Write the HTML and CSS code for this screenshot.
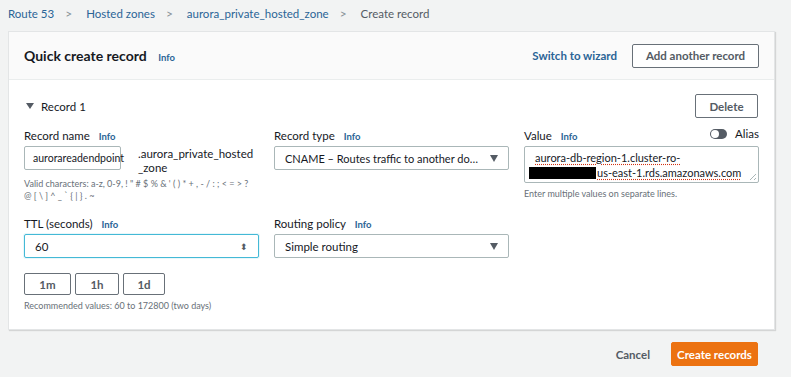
FILE: index.html
```html
<!DOCTYPE html>
<html lang="en">
  <head>
    <meta charset="UTF-8" />
    <title>Create record</title>
    <link rel="stylesheet" href="styles.css">
  </head>
  <body>
    <nav class="crumbs">
      <a>Route 53</a><span class="sep">&gt;</span>
      <a>Hosted zones</a><span class="sep">&gt;</span>
      <a>aurora_private_hosted_zone</a><span class="sep">&gt;</span>
      <span class="current">Create record</span>
    </nav>

    <section class="card">
      <header class="card-head">
        <h1>Quick create record <span class="info">Info</span></h1>
        <div class="head-actions">
          <a class="link">Switch to wizard</a>
          <button class="btn btn-wide">Add another record</button>
        </div>
      </header>

      <div class="card-body">
        <div class="record-bar">
          <span class="record-title"><span class="caret"></span>Record 1</span>
          <button class="btn">Delete</button>
        </div>

        <div class="grid">
          <div class="field">
            <label>Record name <span class="info">Info</span></label>
            <div class="name-row">
              <div class="input name-input">aurorareadendpoint</div>
              <div class="suffix">.aurora_private_hosted<br />_zone</div>
            </div>
            <p class="hint small">Valid characters: a-z, 0-9, ! " # $ % &amp; ' ( ) * + , - / : ; &lt; = &gt; ?<br />@ [ \ ] ^ _ ` { | } . ~</p>
          </div>

          <div class="field">
            <label>Record type <span class="info">Info</span></label>
            <div class="input select"><span class="ellip">CNAME – Routes traffic to another domain name and some AWS resources</span><span class="tri"></span></div>
          </div>

          <div class="field">
            <div class="value-label">
              <label>Value <span class="info">Info</span></label>
              <span class="alias"><span class="toggle"></span>Alias</span>
            </div>
            <div class="input textarea">
              <div><span class="spell">aurora-db-region-1.cluster-ro-</span></div>
              <div><span class="redact"></span><span class="spell">us-east-1.rds.amazonaws.com</span></div>
              <span class="grip"></span>
            </div>
            <p class="hint">Enter multiple values on separate lines.</p>
          </div>

          <div class="field">
            <label>TTL (seconds) <span class="info">Info</span></label>
            <div class="input focus">60<span class="spin">&#x2B0D;</span></div>
            <div class="ttl-btns">
              <button class="btn btn-sm">1m</button>
              <button class="btn btn-sm">1h</button>
              <button class="btn btn-sm">1d</button>
            </div>
            <p class="hint">Recommended values: 60 to 172800 (two days)</p>
          </div>

          <div class="field">
            <label>Routing policy <span class="info">Info</span></label>
            <div class="input select">Simple routing<span class="tri"></span></div>
          </div>
        </div>
      </div>
    </section>

    <footer class="actions">
      <a class="cancel">Cancel</a>
      <button class="btn btn-primary">Create records</button>
    </footer>
  </body>
</html>
```

FILE: styles.css
```css
* {
  box-sizing: border-box;
  font-family: Lato, "Noto Sans", Arial, sans-serif;
}

body {
  margin: 0;
  background-color: #f2f3f3;
  color: #16191f;
  font-size: 11.5px;
}

.crumbs {
  height: 31px;
  padding: 6px 0 0 8px;
  font-size: 11.5px;
  color: #545b64;
}

.crumbs a {
  color: #2a6496;
}

.crumbs .sep {
  display: inline-block;
  padding: 0 11px;
  color: #879196;
  font-size: 12px;
}

.card {
  margin-left: 8px;
  width: 767px;
  background-color: white;
  border: 1px solid #e3e5e6;
  box-shadow: 1px 1px 1px rgba(0, 0, 0, 0.12);
}

.card-head {
  display: flex;
  align-items: center;
  justify-content: space-between;
  height: 48px;
  padding: 0 15px;
  background-color: #fafafa;
  border-bottom: 1px solid #eaeded;
}

.card-head h1 {
  margin: 0;
  font-size: 14px;
  font-weight: 700;
}

.info {
  margin-left: 6px;
  font-size: 9.5px;
  font-weight: 700;
  color: #2a6496;
}

.card-head .info {
  margin-left: 8px;
}

.head-actions {
  display: flex;
  align-items: center;
  gap: 15px;
}

.link {
  color: #2a6496;
  font-weight: 700;
  font-size: 11.5px;
}

.btn {
  height: 24px;
  padding: 0 14px;
  background-color: white;
  border: 1px solid #687078;
  border-radius: 2px;
  color: #545b64;
  font-size: 11.5px;
  font-weight: 700;
  white-space: nowrap;
}

.btn-wide {
  width: 127px;
  padding: 0;
}

.card-body {
  padding: 14px 16px 17px 15px;
}

.record-bar {
  display: flex;
  justify-content: space-between;
  align-items: center;
  padding-left: 2px;
}

.record-bar .btn {
  width: 63px;
  padding: 0;
}

.record-title {
  font-size: 11.5px;
  display: flex;
  align-items: center;
}

.caret {
  width: 0;
  height: 0;
  margin-right: 7px;
  border-left: 4px solid transparent;
  border-right: 4px solid transparent;
  border-top: 6px solid #545b64;
}

.grid {
  display: grid;
  grid-template-columns: 235px 235px 235px;
  column-gap: 15px;
  row-gap: 15px;
  margin-top: 11px;
}

.field label {
  display: block;
  margin-bottom: 4px;
  font-size: 11.5px;
}

.input {
  position: relative;
  display: flex;
  align-items: center;
  height: 24px;
  padding: 0 10px;
  border: 1px solid #aab7b8;
  border-radius: 2px;
  font-size: 11.5px;
  background-color: white;
}

.name-row {
  display: flex;
  gap: 17px;
}

.name-input {
  width: 97px;
  padding: 0 8px;
  flex: none;
  font-size: 10.5px;
}

.suffix {
  font-size: 11.5px;
  line-height: 14px;
  padding-top: 1px;
}

.hint {
  margin: 5px 0 0;
  font-size: 9px;
  line-height: 12px;
  color: #687078;
}

.hint.small {
  margin-top: 3px;
}

.select {
  justify-content: space-between;
}

.ellip {
  flex: 1;
  white-space: nowrap;
  overflow: hidden;
  text-overflow: ellipsis;
  margin-right: 8px;
  font-size: 11px;
}

.tri {
  flex: none;
  width: 0;
  height: 0;
  border-left: 4.5px solid transparent;
  border-right: 4.5px solid transparent;
  border-top: 7px solid #545b64;
}

.value-label {
  display: flex;
  justify-content: space-between;
  align-items: flex-start;
}

.alias {
  display: flex;
  align-items: center;
  gap: 8px;
  font-size: 11.5px;
  margin-top: -2px;
}

.toggle {
  position: relative;
  width: 17px;
  height: 10px;
  border-radius: 5px;
  background-color: #545b64;
}

.toggle::after {
  content: "";
  position: absolute;
  left: 1px;
  top: 1px;
  width: 8px;
  height: 8px;
  border-radius: 50%;
  background-color: white;
}

.textarea {
  display: block;
  height: 37px;
  padding: 3px 10px 0;
  line-height: 15px;
  font-size: 11px;
}

.spell {
  text-decoration: underline dotted #d13212;
  text-underline-offset: 2px;
}

.redact {
  display: inline-block;
  width: 67px;
  height: 12px;
  margin: 0 1px 0 -6px;
  background-color: black;
  vertical-align: -2px;
}

.grip {
  position: absolute;
  right: 2px;
  bottom: 2px;
  width: 6px;
  height: 6px;
  background: linear-gradient(135deg, transparent 45%, #aab7b8 45%, #aab7b8 55%, transparent 55%, transparent 75%, #aab7b8 75%, #aab7b8 85%, transparent 85%);
}

.focus {
  border: 1px solid #44b9d6;
  box-shadow: 0 0 0 1px #e8f7fb;
  justify-content: space-between;
}

.spin {
  font-size: 9px;
  color: #545b64;
}

.ttl-btns {
  display: flex;
  gap: 4px;
  margin-top: 15px;
}

.btn-sm {
  height: 22px;
  padding: 0;
  width: 44px;
}

.btn-sm:first-child {
  width: 47px;
}

.btn-sm:last-child {
  width: 42px;
}

.actions {
  display: flex;
  justify-content: flex-end;
  align-items: center;
  gap: 21px;
  padding: 12px 33px 0 0;
}

.cancel {
  color: #545b64;
  font-weight: 700;
  font-size: 11.5px;
}

.btn-primary {
  width: 87px;
  padding: 0;
  background-color: #ec7211;
  border-color: #ec7211;
  color: white;
}
```
